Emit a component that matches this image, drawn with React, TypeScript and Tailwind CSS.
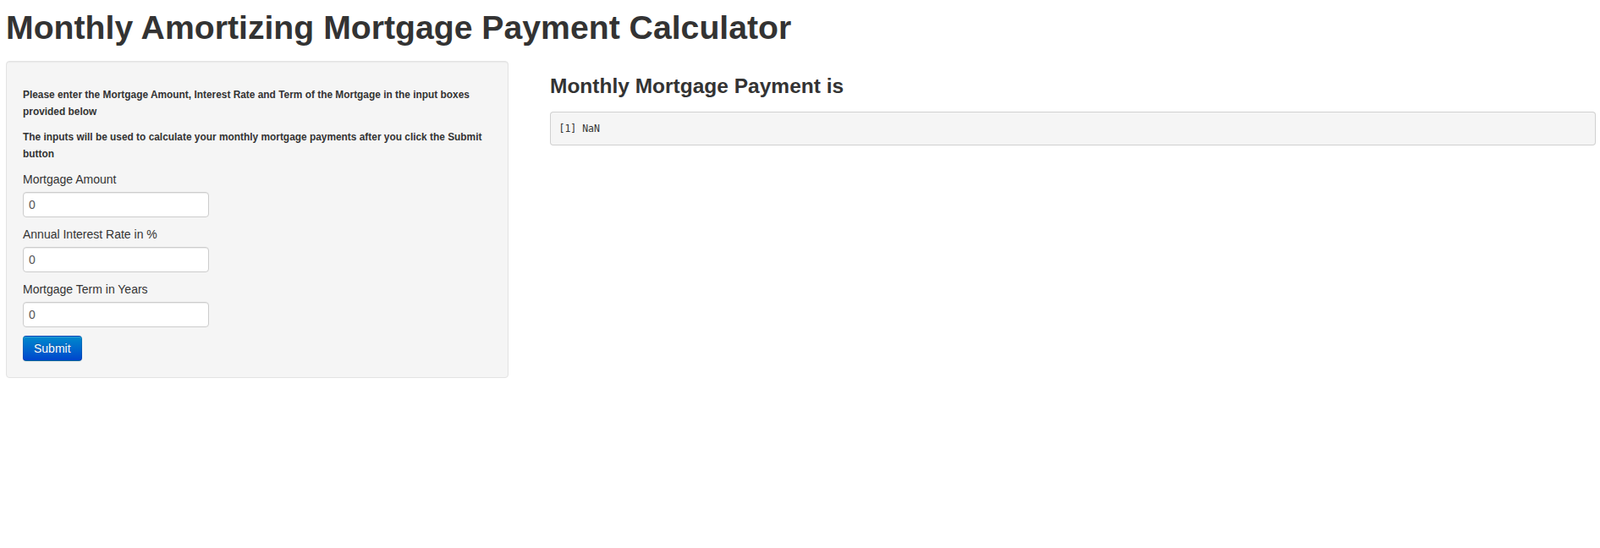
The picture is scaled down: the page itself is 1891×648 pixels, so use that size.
import React from "react";

export default function App() {
  const labelCls = "block text-[14px] leading-[20px] mb-[5px] text-[#333]";
  const inputCls =
    "block w-[220px] h-[30px] px-[6px] py-[4px] text-[14px] leading-[20px] text-[#555] bg-white border border-[#ccc] rounded-[4px] shadow-[inset_0_1px_1px_rgba(0,0,0,0.075)] mb-[10px] outline-none";
  return (
    <div className="min-h-[648px] bg-white pl-[7px] pr-[5px] font-['Liberation_Sans',Arial,sans-serif] text-[14px] leading-[20px] text-[#333]">
      <h1 className="text-[39.2px] leading-[40px] font-bold pt-[13px] mb-[19px] text-[#333]">
        Monthly Amortizing Mortgage Payment Calculator
      </h1>
      <div className="flex items-start">
        <div className="w-[594px] shrink-0 bg-[#f5f5f5] border border-[#e3e3e3] rounded-[4px] p-[19px] shadow-[inset_0_1px_1px_rgba(0,0,0,0.05)]">
          <h6 className="text-[11.9px] leading-[20px] font-bold my-[10px]">
            Please enter the Mortgage Amount, Interest Rate and Term of the Mortgage in the input boxes provided below
          </h6>
          <h6 className="text-[11.9px] leading-[20px] font-bold my-[10px]">
            The inputs will be used to calculate your monthly mortgage payments after you click the Submit button
          </h6>
          <label className={labelCls}>Mortgage Amount</label>
          <input className={inputCls} type="text" defaultValue="0" />
          <label className={labelCls}>Annual Interest Rate in %</label>
          <input className={inputCls} type="text" defaultValue="0" />
          <label className={labelCls}>Mortgage Term in Years</label>
          <input className={inputCls} type="text" defaultValue="0" />
          <button className="block h-[30px] px-[12px] py-[4px] text-[14px] leading-[20px] text-white rounded-[4px] bg-gradient-to-b from-[#0088cc] to-[#0044cc] border border-[rgba(0,0,0,0.1)] border-b-[rgba(0,0,0,0.25)] [text-shadow:0_-1px_0_rgba(0,0,0,0.25)] shadow-[inset_0_1px_0_rgba(255,255,255,0.2),0_1px_2px_rgba(0,0,0,0.05)]">
            Submit
          </button>
        </div>
        <div className="ml-[49px] flex-1 min-w-0">
          <h3 className="text-[24.5px] leading-[40px] font-bold mt-[10px] mb-[10px] text-[#333]">
            Monthly Mortgage Payment is
          </h3>
          <pre className="h-[40px] px-[9.5px] py-[9px] bg-[#f5f5f5] border border-[rgba(0,0,0,0.15)] rounded-[4px] font-['DejaVu_Sans_Mono',monospace] text-[11.5px] leading-[20px] text-[#333]">
            [1] NaN
          </pre>
        </div>
      </div>
    </div>
  );
}
